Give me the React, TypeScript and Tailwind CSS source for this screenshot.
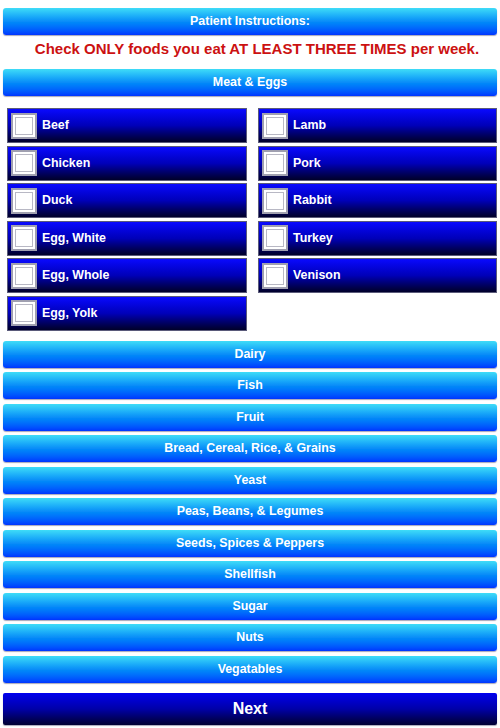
import React from 'react';

const meatLeft = ['Beef', 'Chicken', 'Duck', 'Egg, White', 'Egg, Whole', 'Egg, Yolk'];
const meatRight = ['Lamb', 'Pork', 'Rabbit', 'Turkey', 'Venison'];
const categories = [
  'Dairy',
  'Fish',
  'Fruit',
  'Bread, Cereal, Rice, & Grains',
  'Yeast',
  'Peas, Beans, & Legumes',
  'Seeds, Spices & Peppers',
  'Shellfish',
  'Sugar',
  'Nuts',
  'Vegatables',
];

const Bar: React.FC<{ label: string; className?: string }> = ({ label, className = '' }) => (
  <div
    className={`h-[27px] mx-[3px] rounded-[3px] flex items-center justify-center text-white font-bold text-[12.4px] bg-gradient-to-b from-[#3fdcf7] via-[#0a8cf8] to-[#0033ff] shadow-[0_1px_1px_rgba(0,0,60,0.35)] ${className}`}
  >
    {label}
  </div>
);

const FoodItem: React.FC<{ label: string }> = ({ label }) => (
  <div className="h-[35px] flex items-center gap-[5px] pl-[3px] border border-[#5a5a7a] bg-gradient-to-b from-[#0a0aff] via-[#0000b8] to-[#00002a] text-white font-bold text-[12.4px]">
    <div className="w-[26px] h-[26px] bg-white border-2 border-[#a0a0b0] p-[2px]">
      <div className="w-full h-full border border-[#b8b8c4]" />
    </div>
    <span>{label}</span>
  </div>
);

export default function App() {
  return (
    <div className="w-[500px] h-[728px] bg-white overflow-hidden font-['Liberation_Sans',Arial,sans-serif]">
      <div className="pt-[8px]">
        <Bar label="Patient Instructions:" />
      </div>
      <div className="h-[34px] pb-[6px] pl-[14px] flex items-center justify-center text-[#cc1111] font-bold text-[15px]">
        Check ONLY foods you eat AT LEAST THREE TIMES per week.
      </div>
      <Bar label="Meat & Eggs" />
      <div className="grid grid-cols-[240px_239px] gap-x-[11px] pl-[7px] mt-[12px]">
        <div className="flex flex-col gap-[2.5px]">
          {meatLeft.map((m) => (
            <FoodItem key={m} label={m} />
          ))}
        </div>
        <div className="flex flex-col gap-[2.5px]">
          {meatRight.map((m) => (
            <FoodItem key={m} label={m} />
          ))}
        </div>
      </div>
      <div className="mt-[10px] flex flex-col gap-[4.5px]">
        {categories.map((c) => (
          <Bar key={c} label={c} />
        ))}
      </div>
      <div className="mt-[10px] mx-[3px] h-[32px] rounded-[2px] flex items-center justify-center text-white font-bold text-[16px] bg-gradient-to-b from-[#0000ee] via-[#0000a8] to-[#000033] shadow-[0_1px_1px_rgba(0,0,60,0.35)]">
        Next
      </div>
    </div>
  );
}
